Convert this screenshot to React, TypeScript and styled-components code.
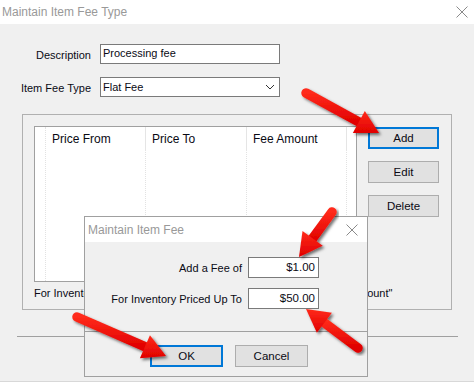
import React from "react";
import styled, { createGlobalStyle } from "styled-components";

const GlobalStyle = createGlobalStyle`
  html, body {
    margin: 0;
    padding: 0;
    background: #f0f0f0;
  }
  body {
    font-family: "Liberation Sans", Arial, sans-serif;
    font-size: 11px;
    color: #0a0a14;
  }
`;

type ArrowProps = {
  from: [number, number];
  to: [number, number];
};

const Arrow: React.FC<ArrowProps> = ({ from, to }) => {
  const dx = to[0] - from[0];
  const dy = to[1] - from[1];
  const len = Math.sqrt(dx * dx + dy * dy);
  const ux = dx / len;
  const uy = dy / len;
  const nx = -uy;
  const ny = ux;
  const headLen = 23;
  const headW = 12.5;
  const bx = to[0] - ux * headLen;
  const by = to[1] - uy * headLen;
  const pts = [
    [to[0], to[1]],
    [bx + nx * headW, by + ny * headW],
    [bx - nx * headW, by - ny * headW],
  ]
    .map((p) => p.join(","))
    .join(" ");
  return (
    <g filter="url(#shadow)">
      <line
        x1={from[0]}
        y1={from[1]}
        x2={bx + ux * 3}
        y2={by + uy * 3}
        stroke="url(#red)"
        strokeWidth={9.5}
        strokeLinecap="round"
      />
      <polygon points={pts} fill="url(#red)" />
    </g>
  );
};

const App: React.FC = () => {
  return (
    <Screen>
      <GlobalStyle />
      <TitleBar>
        <TitleText>Maintain Item Fee Type</TitleText>
        <CloseIcon size={12} />
      </TitleBar>
      <Body>
        <FormRow>
          <Label>Description</Label>
          <TextBox>Processing fee</TextBox>
        </FormRow>
        <FormRow>
          <Label>Item Fee Type</Label>
          <Combo>
            <span>Flat Fee</span>
            <svg width="10" height="6" viewBox="0 0 10 6">
              <path d="M1 1 L5 5 L9 1" fill="none" stroke="#333" strokeWidth="1" />
            </svg>
          </Combo>
        </FormRow>
        <GroupBox>
          <GroupInner>
            <ListBox>
              <Column width={10} />
              <Column width={99}>
                <HeaderCell>Price From</HeaderCell>
              </Column>
              <Column width={100}>
                <HeaderCell>Price To</HeaderCell>
              </Column>
              <Column width={99}>
                <HeaderCell>Fee Amount</HeaderCell>
              </Column>
            </ListBox>
            <ButtonColumn>
              <Button primary>Add</Button>
              <Button>Edit</Button>
              <Button>Delete</Button>
            </ButtonColumn>
          </GroupInner>
          <Note>
            For Inventory priced above the last "Price To" value use the "Fee Amount"
          </Note>
        </GroupBox>
        <Separator />
        <BottomLine />
      </Body>

      <Dialog>
        <DialogTitleBar>
          <TitleText>Maintain Item Fee</TitleText>
          <CloseIcon size={12} />
        </DialogTitleBar>
        <DialogBody>
          <DialogRow>
            <DialogLabel>Add a Fee of</DialogLabel>
            <MoneyBox>$1.00</MoneyBox>
          </DialogRow>
          <DialogRow>
            <DialogLabel>For Inventory Priced Up To</DialogLabel>
            <MoneyBox>$50.00</MoneyBox>
          </DialogRow>
        </DialogBody>
        <DialogFooter>
          <Button primary wide>
            OK
          </Button>
          <Button wide>Cancel</Button>
        </DialogFooter>
      </Dialog>

      <Overlay width="474" height="382" viewBox="0 0 474 382">
        <defs>
          <linearGradient id="red" x1="0" y1="0" x2="0" y2="1">
            <stop offset="0" stopColor="#ff2a1a" />
            <stop offset="1" stopColor="#e00000" />
          </linearGradient>
          <filter id="shadow" x="-20%" y="-20%" width="140%" height="140%">
            <feDropShadow dx="2" dy="2" stdDeviation="1.6" floodColor="#000" floodOpacity="0.55" />
          </filter>
        </defs>
        <Arrow from={[306, 93]} to={[379, 133]} />
        <Arrow from={[332, 212]} to={[299, 257]} />
        <Arrow from={[358, 348]} to={[306, 309]} />
        <Arrow from={[77, 317]} to={[166, 356]} />
      </Overlay>
    </Screen>
  );
};

const CloseIcon: React.FC<{ size: number }> = ({ size }) => (
  <svg width={size} height={size} viewBox="0 0 12 12">
    <path d="M0.5 0.5 L11.5 11.5 M11.5 0.5 L0.5 11.5" stroke="#8a8a8a" strokeWidth="1" />
  </svg>
);

const Screen = styled.div`
  position: relative;
  width: 474px;
  height: 382px;
  overflow: hidden;
  background: #f0f0f0;
`;

const TitleBar = styled.div`
  height: 24px;
  background: #fff;
  display: flex;
  align-items: center;
  justify-content: space-between;
  padding: 0 6px 0 2px;
`;

const TitleText = styled.div`
  font-size: 12px;
  color: #999;
`;

const Body = styled.div`
  display: flex;
  flex-direction: column;
  padding-top: 20px;
`;

const FormRow = styled.div`
  display: flex;
  align-items: center;
  height: 20px;
  margin-bottom: 13px;
`;

const Label = styled.div`
  width: 91px;
  text-align: right;
  margin-right: 9px;
  padding-top: 2px;
`;

const TextBox = styled.div`
  box-sizing: border-box;
  width: 180px;
  height: 20px;
  background: #fff;
  border: 1px solid #7a7a7a;
  padding: 2px 2px 0;
`;

const Combo = styled(TextBox)`
  display: flex;
  align-items: center;
  justify-content: space-between;
  padding: 0 4px 0 2px;
`;

const GroupBox = styled.div`
  box-sizing: border-box;
  margin: 4px 0 0 22px;
  width: 430px;
  height: 196px;
  border: 1px solid #b0b0b0;
  padding: 11px 0 0 11px;
`;

const GroupInner = styled.div`
  display: flex;
  gap: 11px;
`;

const ListBox = styled.div`
  box-sizing: border-box;
  width: 323px;
  height: 156px;
  background: #fff;
  border: 1px solid #a0a0a0;
  display: flex;
`;

const Column = styled.div<{ width: number }>`
  width: ${(p) => p.width}px;
  height: 100%;
  border-right: 1px dotted #e2e2e2;
`;

const HeaderCell = styled.div`
  height: 24px;
  line-height: 24px;
  padding-left: 6px;
  font-size: 12px;
  margin-right: -1px;
  border-right: 1px solid #e5e5e5;
`;

const ButtonColumn = styled.div`
  display: flex;
  flex-direction: column;
  gap: 12px;
  padding-top: 1px;
`;

const Button = styled.div<{ primary?: boolean; wide?: boolean }>`
  box-sizing: border-box;
  width: ${(p) => (p.wide ? 73 : 71)}px;
  height: 22px;
  display: flex;
  align-items: center;
  justify-content: center;
  background: #e1e1e1;
  border: ${(p) => (p.primary ? "2px solid #0078d7" : "1px solid #adadad")};
  font-size: 11.5px;
`;

const Note = styled.div`
  margin-top: 5px;
  white-space: nowrap;
`;

const Separator = styled.div`
  margin: 26px 0 0 17px;
  width: 441px;
  height: 1px;
  background: #a0a0a0;
`;

const BottomLine = styled.div`
  margin-top: 44px;
  height: 1px;
  background: #d8d8d8;
`;

const Dialog = styled.div`
  position: absolute;
  left: 84px;
  top: 216px;
  box-sizing: border-box;
  width: 284px;
  height: 161px;
  border: 1px solid #a0a0a0;
  background: #f0f0f0;
  display: flex;
  flex-direction: column;
`;

const DialogTitleBar = styled.div`
  height: 25px;
  background: #fff;
  display: flex;
  align-items: center;
  justify-content: space-between;
  padding: 0 9px 0 3px;
`;

const DialogBody = styled.div`
  display: flex;
  flex-direction: column;
  gap: 10px;
  padding: 15px 0 0;
  height: 74px;
  border-bottom: 1px solid #a0a0a0;
`;

const DialogRow = styled.div`
  display: flex;
  align-items: center;
`;

const DialogLabel = styled.div`
  width: 157px;
  text-align: right;
  margin-right: 6px;
  font-size: 11px;
`;

const MoneyBox = styled(TextBox)`
  width: 71px;
  height: 21px;
  text-align: right;
  padding: 3px 3px 0;
  font-size: 11.5px;
`;

const DialogFooter = styled.div`
  display: flex;
  gap: 12px;
  padding: 13px 0 0 65px;
`;

const Overlay = styled.svg`
  position: absolute;
  left: 0;
  top: 0;
  pointer-events: none;
`;

export default App;
